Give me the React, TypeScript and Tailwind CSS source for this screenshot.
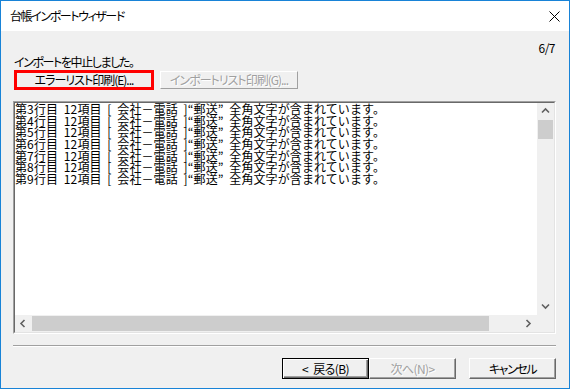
import React from 'react';

const ui = "font-['Noto_Sans_CJK_JP','Noto_Sans',sans-serif] [font-feature-settings:'palt']";

const rows = [3, 4, 5, 6, 7, 8, 9];

function Chevron({ dir }: { dir: 'up' | 'down' | 'left' | 'right' }) {
  const d = {
    up: 'M1 5.5 L4.5 2 L8 5.5',
    down: 'M1 2.5 L4.5 6 L8 2.5',
    left: 'M5.5 1 L2 4.5 L5.5 8',
    right: 'M2.5 1 L6 4.5 L2.5 8',
  }[dir];
  return (
    <svg width="9" height="9" viewBox="0 0 9 9">
      <path d={d} fill="none" stroke="#606060" strokeWidth="1.6" />
    </svg>
  );
}

export default function App() {
  return (
    <div className={`w-[570px] h-[389px] border border-[#1883d7] bg-[#f0f0f0] flex flex-col text-black ${ui}`}>
      {/* Title bar */}
      <div className="h-[30px] bg-white flex items-center justify-between pl-[9px] pr-[9px]">
        <span className="text-[12px] leading-none tracking-[-1.4px]">台帳インポートウィザード</span>
        <svg width="11" height="11" viewBox="0 0 11 11">
          <path d="M0.5 0.5 L10.5 10.5 M10.5 0.5 L0.5 10.5" stroke="#000" strokeWidth="1" />
        </svg>
      </div>

      {/* Body */}
      <div className="flex-1 flex flex-col pl-[12px] pr-[13px]">
        <div className="mt-[10px] h-[14px] leading-[14px] text-right pr-[1px] text-[12px] tracking-[-0.5px]">
          6/7
        </div>
        <div className="h-[14px] leading-[14px] pl-[1px] text-[12px] tracking-[-1.4px]">インポートを中止しました。</div>

        {/* Top buttons */}
        <div className="mt-[1px] flex items-center h-[20px]">
          <button className="ml-[1px] w-[140px] h-[20px] border-[3px] border-[#ff0000] bg-[#f0f0f0] text-[12px] leading-none tracking-[-1px]">
            エラーリスト印刷(E)...
          </button>
          <button className="ml-[6px] w-[138px] h-[18px] border border-t-white border-l-white border-b-[#a0a0a0] border-r-[#a0a0a0] bg-[#f0f0f0] text-[12px] leading-none tracking-[-1px] text-[#a0a0a0] [text-shadow:1px_1px_0_#fff]">
            インポートリスト印刷(G)...
          </button>
        </div>

        {/* Log box */}
        <div className="mt-[11px] h-[233px] border border-t-[#a0a0a0] border-l-[#a0a0a0] border-b-white border-r-white flex">
          <div className="flex-1 flex flex-col border border-t-[#696969] border-l-[#696969] border-b-[#e3e3e3] border-r-[#e3e3e3] bg-white">
            <div className="flex-1 flex min-h-0">
              <div className="flex-1 text-[12px] tracking-[0.1px] [word-spacing:3px] leading-[11.67px] [font-feature-settings:normal] whitespace-nowrap">
                {rows.map((n) => (
                  <div key={n}>第{n}行目 12項目 [ 会社－電話 ]“郵送” 全角文字が含まれています。</div>
                ))}
              </div>
              <div className="w-[17px] bg-[#f0f0f0] flex flex-col">
                <div className="h-[17px] flex items-center justify-center">
                  <Chevron dir="up" />
                </div>
                <div className="h-[19px] mx-[1px] bg-[#cdcdcd]" />
                <div className="flex-1" />
                <div className="h-[17px] flex items-center justify-center">
                  <Chevron dir="down" />
                </div>
              </div>
            </div>
            <div className="h-[17px] flex bg-[#f0f0f0]">
              <div className="w-[17px] flex items-center justify-center">
                <Chevron dir="left" />
              </div>
              <div className="flex-1 flex items-center">
                <div className="w-[457px] h-[15px] bg-[#cdcdcd]" />
              </div>
              <div className="w-[17px] flex items-center justify-center">
                <Chevron dir="right" />
              </div>
              <div className="w-[17px]" />
            </div>
          </div>
        </div>

        {/* Separator */}
        <div className="mt-[11px] h-[2px] border-t border-t-[#a0a0a0] border-b border-b-white" />

        {/* Bottom buttons */}
        <div className="mt-[11px] flex justify-end gap-[13px]">
          <div className="flex">
            <button className="w-[87px] h-[21px] border border-black bg-[#f0f0f0] shadow-[inset_1px_1px_0_#fff,inset_-1px_-1px_0_#696969,inset_-2px_-2px_0_#a0a0a0] text-[12px] leading-none tracking-[-0.6px] [word-spacing:3px]">
              &lt; 戻る(B)
            </button>
            <button className="w-[87px] h-[21px] border border-t-white border-l-white border-b-[#696969] border-r-[#696969] shadow-[inset_-1px_-1px_0_#a0a0a0] bg-[#f0f0f0] text-[12px] leading-none tracking-[-0.6px] text-[#a0a0a0] [text-shadow:1px_1px_0_#fff]">
              次へ(N)&gt;
            </button>
          </div>
          <button className="w-[87px] h-[21px] border border-t-white border-l-white border-b-[#696969] border-r-[#696969] shadow-[inset_-1px_-1px_0_#a0a0a0] bg-[#f0f0f0] text-[12px] leading-none tracking-[-1.4px]">
            キャンセル
          </button>
        </div>
      </div>
    </div>
  );
}
